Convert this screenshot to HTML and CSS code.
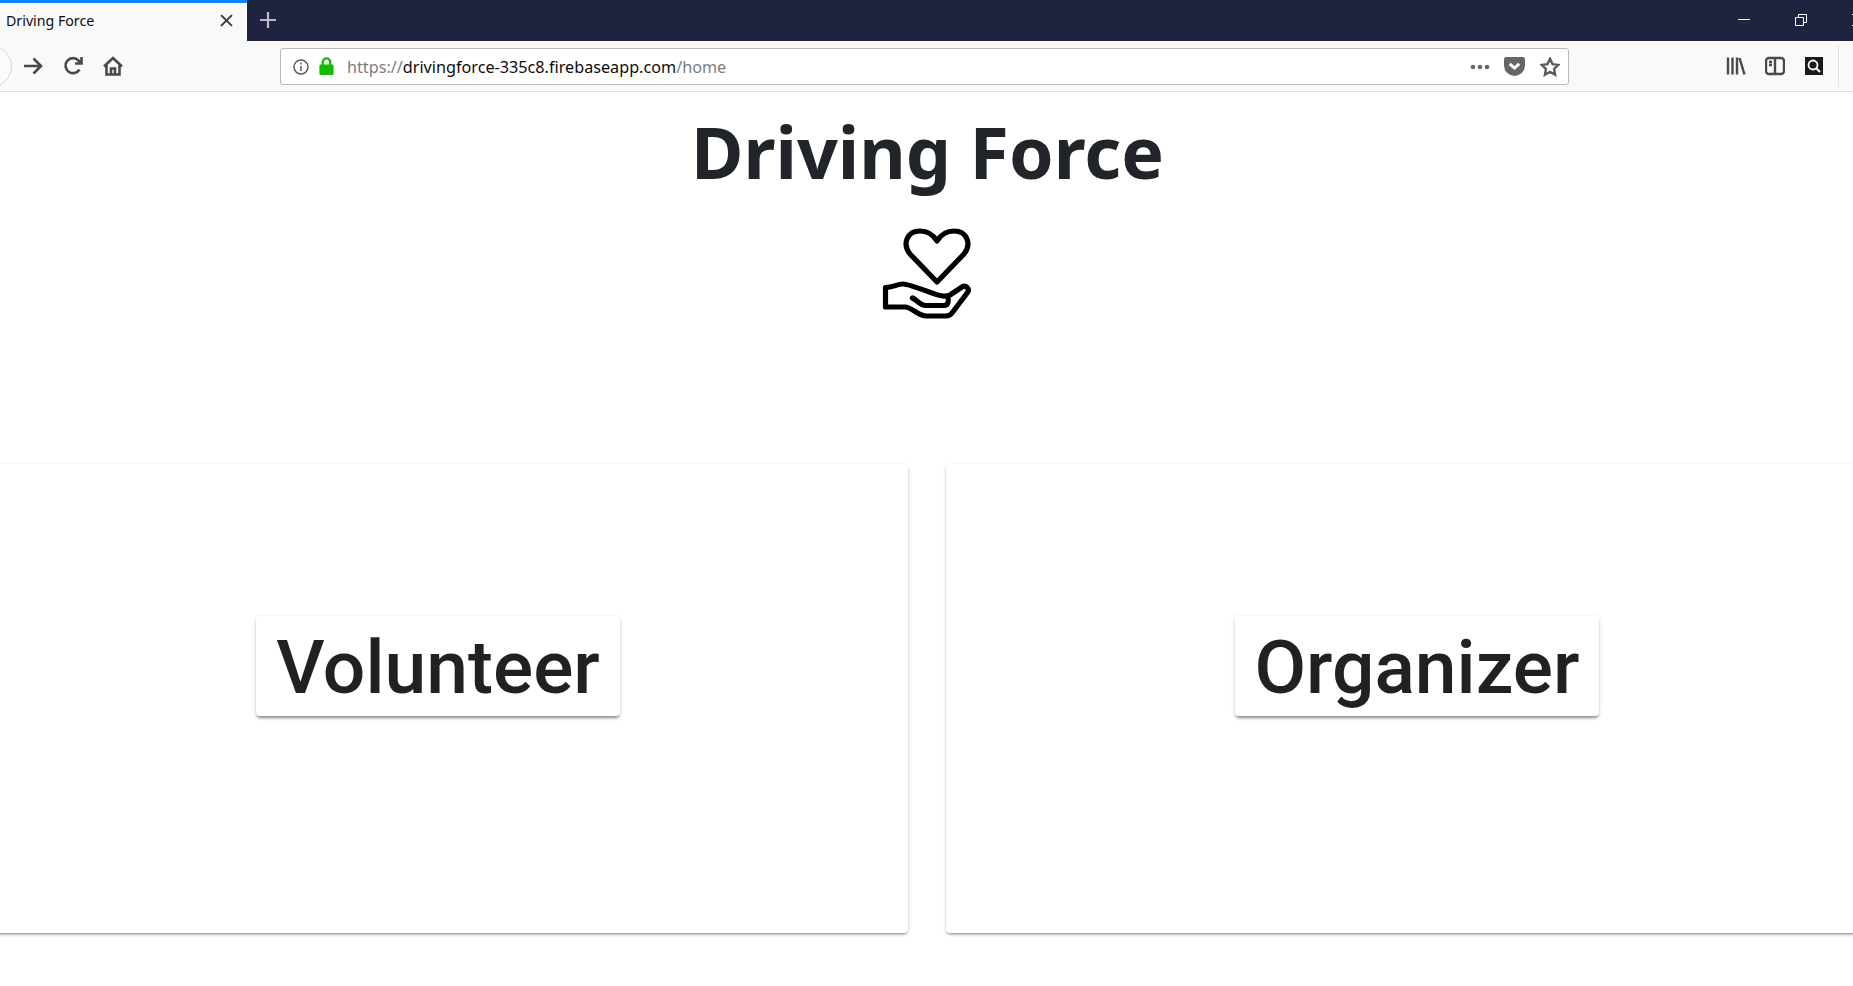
FILE: index.html
```html
<!DOCTYPE html>
<html lang="en">
<head>
  <meta charset="UTF-8" />
  <title>Driving Force</title>
  <link rel="stylesheet" href="styles.css">
</head>
<body>

  <div class="tabbar">
    <div class="tab">
      <span class="tab-title">Driving Force</span>
      <svg class="tab-close" viewBox="0 0 12 12"><path d="M1 1l10 10M11 1L1 11"/></svg>
    </div>
    <svg class="new-tab" viewBox="0 0 18 18"><path d="M9 1v16M1 9h16"/></svg>
    <div class="window-btns">
      <svg viewBox="0 0 12 12"><path d="M0 5.500h12"/></svg>
      <svg viewBox="0 0 12 12"><path d="M.5 3.500h8v8h-8zM3.500 3.500v-3h8v8h-3"/></svg>
      <svg viewBox="0 0 12 12"><path d="M0 0l12 12M12 0L0 12"/></svg>
    </div>
  </div>

  <div class="toolbar">
    <div class="back-btn"></div>
    <svg class="tool-icon" viewBox="0 0 20 20"><path d="M1 10h17M10.500 2.500L18 10l-7.500 7.500"/></svg>
    <svg class="tool-icon" viewBox="0 0 20 20"><path d="M16.500 13.500A7.500 7.500 0 1 1 15.500 4.500L18 7M18.500 1v6.500H12"/></svg>
    <svg class="tool-icon" viewBox="0 0 20 20"><path d="M1 10.500L10 2l9 8.500M3.500 9v9.500h13V9M8 18.500v-6h4v6"/></svg>

    <div class="urlbar">
      <svg class="info-icon" viewBox="0 0 16 16"><circle cx="8" cy="8" r="7"/><path d="M8 7v5M8 3.500v2"/></svg>
      <svg class="lock-icon" viewBox="0 0 17 19"><path d="M4.500 9V5.500a4 4 0 0 1 8 0V9" fill="none" stroke="#12bc00" stroke-width="2.500"/><rect x="1" y="8" width="15" height="11" rx="1.500" fill="#12bc00"/></svg>
      <div class="url"><span class="dim">https://</span>drivingforce-335c8.firebaseapp.com<span class="dim">/home</span></div>
      <svg class="dots" viewBox="0 0 20 6"><circle cx="3" cy="3" r="2.300"/><circle cx="10" cy="3" r="2.300"/><circle cx="17" cy="3" r="2.300"/></svg>
      <svg class="pocket" viewBox="0 0 20 18"><path d="M2 0h16a2 2 0 0 1 2 2v6a10 10 0 0 1-20 0V2a2 2 0 0 1 2-2z"/><path class="pocket-check" d="M5.500 6.500L10 10.500l4.500-4"/></svg>
      <svg class="star" viewBox="0 0 20 20"><path d="M10 1.800l2.500 5.300 5.800.8-4.200 4 1 5.800-5.100-2.800-5.100 2.800 1-5.800-4.200-4 5.800-.8z"/></svg>
    </div>

    <svg class="tool-icon library" viewBox="0 0 20 20"><path d="M2 1.500v17M6.500 1.500v17M11 1.500v17M13.500 2l5 16.500"/></svg>
    <svg class="tool-icon sidebar" viewBox="0 0 20 20"><rect x="1" y="2" width="18" height="16" rx="3"/><path d="M10 2v16M4 6h3M4 9h3"/></svg>
    <svg class="shot-icon" viewBox="0 0 18 18"><rect width="18" height="18" fill="#1a1a1a"/><circle cx="8" cy="8" r="4.500" fill="none" stroke="#fff" stroke-width="1.800"/><path d="M11.500 11.500L15 15" stroke="#fff" stroke-width="2"/></svg>
    <div class="tool-sep"></div>
  </div>

  <main class="page">
    <h1 class="title">Driving Force</h1>
    <svg class="logo" viewBox="20 10 93 95">
      <path d="M77 66L50 38C42 28 47 15 60 15C68 15 74 20 77 25C80 20 86 15 94 15C107 15 112 28 104 38Z"/>
      <path d="M25.500 71.500C33 71.500 37 68 43 68C50 68 70 77 80 79.500C84 80.500 87 80.500 90 79L102 71C106 68.500 110 73 107.500 76.500L92 97C90.500 99 89 100 86 100H66C58 100 52 91 45 91H25.500Z"/>
      <path d="M52.500 82C57 84 60 89.500 66 89.500H84C88 89.500 89.500 85 87.500 80"/>
    </svg>

    <div class="choices">
      <section class="card">
        <button class="choice-btn">Volunteer</button>
      </section>
      <section class="card">
        <button class="choice-btn">Organizer</button>
      </section>
    </div>
  </main>

</body>
</html>
```

FILE: styles.css
```css
html, body {
  margin: 0;
  height: 986px;
  overflow: hidden;
  background: #fff;
}
svg {
  display: block;
  flex: none;
}

/* tab strip */
.tabbar {
  display: flex;
  align-items: center;
  height: 41px;
  background: #202340;
}
.tab {
  display: flex;
  align-items: center;
  box-sizing: border-box;
  width: 247px;
  height: 41px;
  padding: 0 14px 3px 6px;
  background: #f9f9fa;
  border-top: 3px solid #0a84ff;
}
.tab-title {
  font: 14.200px "Noto Sans", sans-serif;
  color: #0c0c0d;
}
.tab-close {
  width: 13px;
  height: 13px;
  margin-left: auto;
  fill: none;
  stroke: #3a3a3c;
  stroke-width: 1.800;
}
.new-tab {
  width: 18px;
  height: 18px;
  margin: -2px 0 0 12px;
  fill: none;
  stroke: #b9bac4;
  stroke-width: 2.200;
}
.window-btns {
  display: flex;
  gap: 45px;
  margin: -1px -11px 0 auto;
}
.window-btns svg {
  width: 12px;
  height: 12px;
  fill: none;
  stroke: #fff;
  stroke-width: 1;
}

/* nav bar */
.toolbar {
  display: flex;
  align-items: center;
  box-sizing: border-box;
  height: 51px;
  background: #f9f9fa;
  border-bottom: 1px solid #dcdcde;
}
.back-btn {
  flex: none;
  box-sizing: border-box;
  width: 41px;
  height: 41px;
  margin: 0 11px 0 -29px;
  border: 1px solid #d5d5d7;
  border-radius: 50%;
  background: #fbfbfb;
}
.tool-icon {
  width: 20px;
  height: 20px;
  margin-right: 20px;
  fill: none;
  stroke: #4a4a4c;
  stroke-width: 2.600;
}
.library {
  stroke-width: 2.400;
  margin-left: -1px;
}
.sidebar {
  stroke-width: 2.400;
  margin-left: -1px;
}
.urlbar {
  flex: none;
  display: flex;
  align-items: center;
  box-sizing: border-box;
  width: 1289px;
  height: 37px;
  margin: 1px 158px 0 137px;
  padding: 0 8px 0 12px;
  background: #fff;
  border: 1px solid #b9b9bb;
  border-radius: 3px;
}
.info-icon {
  width: 16px;
  height: 16px;
  margin-right: 9px;
  fill: none;
  stroke: #5c5c5f;
  stroke-width: 1.500;
}
.lock-icon {
  width: 17px;
  height: 18px;
  margin: -1px 12px 0 0;
}
.url {
  flex: 1;
  font: 16.200px "Noto Sans", sans-serif;
  color: #0c0c0d;
  white-space: nowrap;
}
.dim {
  color: #7c7c7f;
}
.dots {
  width: 20px;
  height: 6px;
  fill: #666668;
}
.pocket {
  width: 21px;
  height: 19px;
  margin-left: 14px;
  fill: #666668;
}
.pocket-check {
  fill: none;
  stroke: #fff;
  stroke-width: 2.800;
}
.star {
  width: 20px;
  height: 20px;
  margin-left: 15px;
  fill: none;
  stroke: #5c5c5f;
  stroke-width: 2.400;
}
.shot-icon {
  width: 18px;
  height: 18px;
}
.tool-sep {
  flex: none;
  width: 1px;
  height: 42px;
  margin-left: 15px;
  background: #e1e1e3;
}

/* page */
.page {
  display: flex;
  flex-direction: column;
  align-items: center;
}
.title {
  margin: 16px 0 0 2px;
  font: 700 71.600px/86px "Noto Sans", sans-serif;
  color: #212529;
}
.logo {
  width: 93px;
  height: 95px;
  margin-top: 32px;
  fill: none;
  stroke: #000;
  stroke-width: 5.200;
  stroke-linejoin: round;
  stroke-linecap: round;
}
.choices {
  align-self: stretch;
  display: grid;
  grid-template-columns: 940px 942px;
  gap: 38px;
  margin: 143px -35px 0 -32px;
}
.card {
  display: flex;
  align-items: center;
  justify-content: center;
  height: 469px;
  background: #fff;
  border-radius: 4px;
  box-shadow: 0 2px 3px -1px rgba(0,0,0,.45), 0 1px 4px rgba(0,0,0,.1);
}
.choice-btn {
  width: 364px;
  height: 100px;
  margin: -65px 0 0;
  padding: 2px 0 0;
  border: none;
  border-radius: 4px;
  background: #fff;
  color: rgba(0,0,0,.87);
  font: 500 75px/98px Roboto, sans-serif;
  box-shadow: 0 3px 3px -1px rgba(0,0,0,.4), 0 1px 5px rgba(0,0,0,.12);
}
```
